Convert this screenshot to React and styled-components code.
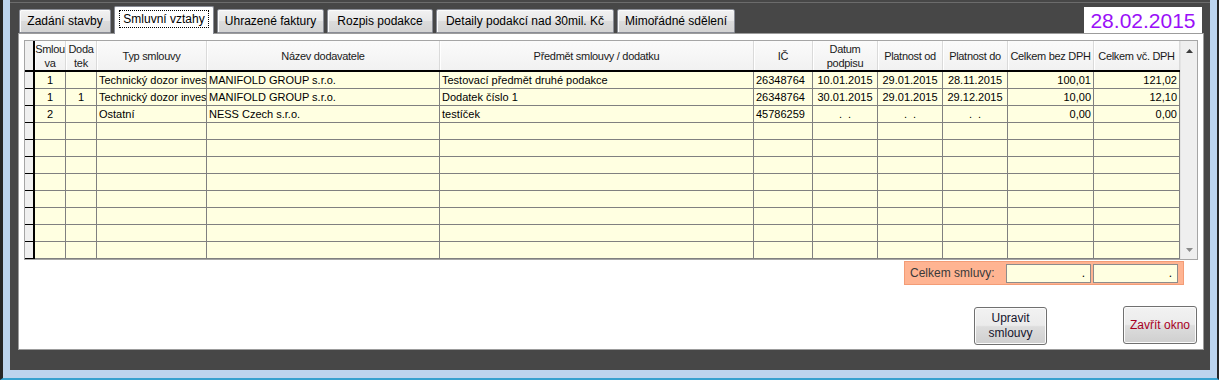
import React from "react";
import styled, { createGlobalStyle } from "styled-components";

const GlobalStyle = createGlobalStyle`
  html, body { margin: 0; padding: 0; background: #474747; }
  body { font-family: "Liberation Sans", Arial, sans-serif; }
  #root { width: 1219px; height: 380px; overflow: hidden; }
  * { box-sizing: border-box; }
`;

// column widths of the grid (row selector first), each including its right rule
const COLS = "10px 31px 31px 110px 233px 314px 59px 65px 65px 65px 86px 86px";

const Frame = styled.div`
  width: 1219px;
  height: 380px;
  display: flex;
  background: #bcd4ee;
  border-left: 3px solid #262626;
  border-right: 2px solid #262626;
  border-bottom: 2px solid #36a1cf;
  padding: 0 7px 8px;
`;

const Client = styled.div`
  flex: 1;
  display: flex;
  flex-direction: column;
  padding: 6px 6px 20px 8px;
  background: linear-gradient(#474747 0 2px, #6c6c6c 2px 3px, #474747 3px);
`;

const TabBar = styled.div`
  position: relative;
  z-index: 1;
  display: flex;
  align-items: flex-end;
  height: 27px;
  padding-left: 1px;
`;

const Tab = styled.div`
  width: ${(p) => p.$w}px;
  height: ${(p) => (p.$active ? 28 : 24)}px;
  margin-right: 3px;
  margin-bottom: ${(p) => (p.$active ? -1 : 0)}px;
  display: flex;
  align-items: center;
  justify-content: center;
  font-size: 12px;
  color: #000;
  white-space: nowrap;
  border: 1px solid #898c95;
  border-bottom: ${(p) => (p.$active ? "none" : "1px solid #898c95")};
  border-radius: 2px 2px 0 0;
  background: ${(p) =>
    p.$active
      ? "#fff"
      : "linear-gradient(#f2f2f2, #e8e8e8 48%, #dbdbdb 52%, #d3d3d3)"};
  box-shadow: ${(p) => (p.$active ? "none" : "inset 1px 1px 0 #fbfbfb")};
  padding-bottom: ${(p) => (p.$active ? 3 : 0)}px;
`;

const FocusRing = styled.span`
  width: calc(100% - 8px);
  height: 18px;
  line-height: 16px;
  text-align: center;
  border: 1px dotted #000;
`;

const DateBox = styled.div`
  margin-left: auto;
  margin-right: 2px;
  width: 118px;
  height: 26px;
  display: flex;
  align-items: center;
  justify-content: center;
  background: #fff;
  color: #9a10f8;
  font-size: 21px;
  line-height: 1;
  padding-top: 1px;
`;

const Panel = styled.section`
  flex: 1;
  display: flex;
  flex-direction: column;
  background: #fff;
  border: 1px solid #9c9c9c;
  padding: 6px 5px 4px;
`;

const Grid = styled.div`
  display: flex;
  height: 220px;
  border: 1px solid #a6a6a6;
  background: #fff;
`;

const Table = styled.div`
  width: 1155px;
  display: flex;
  flex-direction: column;
`;

const HeadRow = styled.div`
  display: grid;
  grid-template-columns: ${COLS};
  height: 31px;
  border-bottom: 2px solid #000;
`;

const HeadCell = styled.div`
  display: flex;
  align-items: center;
  justify-content: center;
  text-align: center;
  font-size: 11px;
  line-height: 14px;
  letter-spacing: -0.3px;
  color: #1a1a1a;
  white-space: pre;
  background: linear-gradient(#fbfbfb, #f1f1f1);
  border-right: 1px solid #dadada;
  box-shadow: inset 1px 0 0 #ffffff;
  overflow: hidden;
`;

const Selector = styled.div`
  background: #f0f0f0;
  border-right: 2px solid #000;
  border-bottom: ${(p) => (p.$head ? "none" : "1px solid #000")};
`;

const Row = styled.div`
  display: grid;
  grid-template-columns: ${COLS};
  height: 17px;
  background: #ffffe1;
`;

const Cell = styled.div`
  border-right: 1px solid #808080;
  border-bottom: 1px solid #808080;
  padding: 0 ${(p) => (p.$align === "right" ? 2 : 1)}px 0
    ${(p) => (p.$align === "left" ? 2 : 1)}px;
  font-size: 11px;
  line-height: 16px;
  color: #000;
  text-align: ${(p) => p.$align || "left"};
  white-space: pre;
  overflow: hidden;
`;

const ScrollBar = styled.div`
  width: 17px;
  display: flex;
  flex-direction: column;
  justify-content: space-between;
  align-items: center;
  padding: 8px 0 7px;
  background: #efefef;
  border-left: 1px solid #e4e4e4;
`;

const Summary = styled.div`
  align-self: flex-end;
  margin: 1px 14px 0 0;
  width: 280px;
  height: 24px;
  display: flex;
  align-items: center;
  padding: 0 5px;
  background: #ffb492;
  border: 1px solid #f39c76;
`;

const SumLabel = styled.span`
  flex: 1;
  font-size: 12px;
  color: #3a3a3a;
`;

const SumField = styled.div`
  width: 85px;
  height: 19px;
  margin-left: 2px;
  padding-right: 5px;
  background: #ffffe1;
  border: 1px solid #8c8c8c;
  font-size: 12px;
  line-height: 16px;
  text-align: right;
`;

const ButtonRow = styled.div`
  margin-top: auto;
  display: flex;
  justify-content: flex-end;
  align-items: flex-end;
  gap: 76px;
  padding-right: 1px;
`;

const Button = styled.button`
  width: ${(p) => p.$w}px;
  height: 38px;
  margin-bottom: ${(p) => (p.$danger ? 1 : 0)}px;
  padding: 0;
  font-family: "Liberation Sans", Arial, sans-serif;
  font-size: 12px;
  line-height: 15px;
  color: ${(p) => (p.$danger ? "#a8001f" : "#14142c")};
  border: 1px solid #707070;
  border-radius: 3px;
  background: linear-gradient(#f2f2f2, #ebebeb 48%, #dddddd 52%, #cfcfcf);
  box-shadow: inset 0 0 0 1px #fbfbfb;
`;

const tabs = [
  { label: "Zadání stavby", w: 92 },
  { label: "Smluvní vztahy", w: 100, active: true },
  { label: "Uhrazené faktury", w: 107 },
  { label: "Rozpis podakce", w: 106 },
  { label: "Detaily podakcí nad 30mil. Kč", w: 178 },
  { label: "Mimořádné sdělení", w: 118 },
];

const columns = [
  { head: "Smlou\nva", key: "s", align: "center" },
  { head: "Doda\ntek", key: "d", align: "center" },
  { head: "Typ smlouvy", key: "typ", align: "left" },
  { head: "Název dodavatele", key: "naz", align: "left" },
  { head: "Předmět smlouvy / dodatku", key: "pred", align: "left" },
  { head: "IČ", key: "ic", align: "left" },
  { head: "Datum\npodpisu", key: "dat", align: "center" },
  { head: "Platnost od", key: "od", align: "center" },
  { head: "Platnost do", key: "do", align: "center" },
  { head: "Celkem bez DPH", key: "bez", align: "right" },
  { head: "Celkem vč. DPH", key: "vc", align: "right" },
];

// the grid shows the contract type cut at the column edge
const data = [
  {
    s: "1", d: "", typ: "Technický dozor inves", naz: "MANIFOLD GROUP s.r.o.",
    pred: "Testovací předmět druhé podakce", ic: "26348764", dat: "10.01.2015",
    od: "29.01.2015", do: "28.11.2015", bez: "100,01", vc: "121,02",
  },
  {
    s: "1", d: "1", typ: "Technický dozor inves", naz: "MANIFOLD GROUP s.r.o.",
    pred: "Dodatek číslo 1", ic: "26348764", dat: "30.01.2015",
    od: "29.01.2015", do: "29.12.2015", bez: "10,00", vc: "12,10",
  },
  {
    s: "2", d: "", typ: "Ostatní", naz: "NESS Czech s.r.o.", pred: "testíček",
    ic: "45786259", dat: ".  .", od: ".  .", do: ".  .", bez: "0,00", vc: "0,00",
  },
];
while (data.length < 11) data.push({});

const Arrow = ({ down, color }) => (
  <svg width="7" height="4" viewBox="0 0 7 4">
    <path d={down ? "M0 0h7L3.5 4z" : "M3.5 0L7 4H0z"} fill={color} />
  </svg>
);

export default function App() {
  return (
    <>
      <GlobalStyle />
      <Frame>
        <Client>
          <TabBar>
            {tabs.map((t) => (
              <Tab key={t.label} $w={t.w} $active={t.active}>
                {t.active ? <FocusRing>{t.label}</FocusRing> : t.label}
              </Tab>
            ))}
            <DateBox>28.02.2015</DateBox>
          </TabBar>

          <Panel>
            <Grid>
              <Table>
                <HeadRow>
                  <Selector $head />
                  {columns.map((c) => (
                    <HeadCell key={c.key}>{c.head}</HeadCell>
                  ))}
                </HeadRow>
                {data.map((r, i) => (
                  <Row key={i}>
                    <Selector />
                    {columns.map((c) => (
                      <Cell key={c.key} $align={c.align}>
                        {r[c.key] || ""}
                      </Cell>
                    ))}
                  </Row>
                ))}
              </Table>
              <ScrollBar>
                <Arrow color="#3c3c3c" />
                <Arrow down color="#8a8a8a" />
              </ScrollBar>
            </Grid>

            <Summary>
              <SumLabel>Celkem smluvy:</SumLabel>
              <SumField>.</SumField>
              <SumField>.</SumField>
            </Summary>

            <ButtonRow>
              <Button $w={73}>
                Upravit
                <br />
                smlouvy
              </Button>
              <Button $w={74} $danger>
                Zavřít okno
              </Button>
            </ButtonRow>
          </Panel>
        </Client>
      </Frame>
    </>
  );
}
